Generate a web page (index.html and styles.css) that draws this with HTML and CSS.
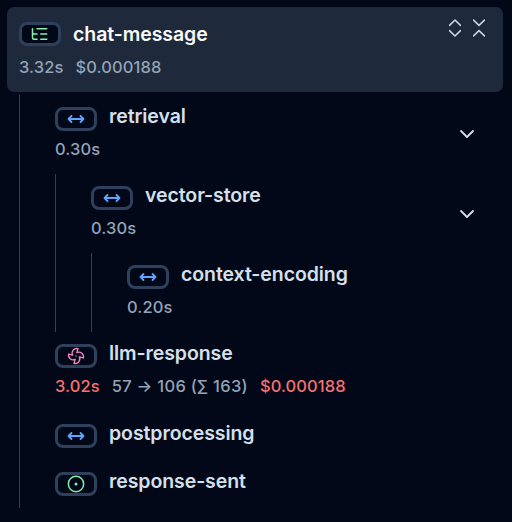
FILE: index.html
```html
<!DOCTYPE html>
<html lang="en">
<head>
<meta charset="utf-8">
<title>Trace</title>
<link rel="stylesheet" href="styles.css">
</head>
<body>
<svg class="defs" width="0" height="0">
  <symbol id="span" viewBox="0 0 24 24"><path d="m18 8 4 4-4 4M2 12h20M6 8l-4 4 4 4"/></symbol>
  <symbol id="tree" viewBox="0 0 24 24"><path d="M21 12h-8M21 5H8M21 19h-8M2 5v5c0 1.1.9 2 2 2h4M2 10v7c0 1.1.9 2 2 2h4"/></symbol>
  <symbol id="fan" viewBox="0 0 24 24"><path d="M10.827 16.379a6.082 6.082 0 0 1-8.618-7.002l5.412 1.45a6.082 6.082 0 0 1 7.002-8.618l-1.45 5.412a6.082 6.082 0 0 1 8.618 7.002l-5.412-1.45a6.082 6.082 0 0 1-7.002 8.618l1.45-5.412ZM12 12v.01"/></symbol>
  <symbol id="event" viewBox="0 0 24 24"><circle cx="12" cy="12" r="10.2"/><circle cx="12" cy="12" r="1"/></symbol>
  <symbol id="down" viewBox="0 0 24 24"><path d="m6 9 6 6 6-6"/></symbol>
</svg>
<main class="trace">
  <header class="root">
    <div class="body">
      <div class="title"><span class="badge green"><svg><use href="#tree"/></svg></span><span class="name">chat-message</span></div>
      <div class="meta"><span>3.32s</span><span>$0.000188</span></div>
    </div>
    <div class="actions">
      <svg viewBox="0 0 12 18"><path d="m.5 6.3 5.5-5.3 5.5 5.3M.5 11.7 6 17l5.5-5.3"/></svg>
      <svg viewBox="0 0 12 18"><path d="M.5 1 6 6.3 11.5 1M.5 17 6 11.7l5.5 5.3"/></svg>
    </div>
  </header>
  <div class="children">
    <div class="row">
      <div class="body">
        <div class="title"><span class="badge blue"><svg><use href="#span"/></svg></span><span class="name">retrieval</span></div>
        <div class="meta"><span>0.30s</span></div>
      </div>
      <svg class="chevron"><use href="#down"/></svg>
    </div>
    <div class="children">
      <div class="row">
        <div class="body">
          <div class="title"><span class="badge blue"><svg><use href="#span"/></svg></span><span class="name">vector-store</span></div>
          <div class="meta"><span>0.30s</span></div>
        </div>
        <svg class="chevron"><use href="#down"/></svg>
      </div>
      <div class="children">
        <div class="row">
          <div class="body">
            <div class="title"><span class="badge blue"><svg><use href="#span"/></svg></span><span class="name">context-encoding</span></div>
            <div class="meta"><span>0.20s</span></div>
          </div>
        </div>
      </div>
    </div>
    <div class="row usage">
      <div class="body">
        <div class="title"><span class="badge pink"><svg><use href="#fan"/></svg></span><span class="name">llm-response</span></div>
        <div class="meta"><span class="hot">3.02s</span><span class="tokens">57 → 106 (∑ 163)</span><span class="hot">$0.000188</span></div>
      </div>
    </div>
    <div class="row compact">
      <div class="title"><span class="badge blue"><svg><use href="#span"/></svg></span><span class="name">postprocessing</span></div>
    </div>
    <div class="row compact">
      <div class="title"><span class="badge green"><svg><use href="#event"/></svg></span><span class="name">response-sent</span></div>
    </div>
  </div>
</main>
</body>
</html>
```
FILE: styles.css
```css
* { box-sizing: border-box; }
body {
  margin: 0;
  min-height: 522px;
  background: #020817;
  color: #d5e0ec;
  font-family: Inter, "Liberation Sans", sans-serif;
}
.defs { display: none; }
.trace { padding: 7px 9px 0 7px; }
svg {
  fill: none;
  stroke: currentColor;
  stroke-width: 2;
  stroke-linecap: round;
  stroke-linejoin: round;
}
.root {
  display: flex;
  justify-content: space-between;
  height: 85px;
  margin-bottom: 3px;
  padding: 15px 18px 0 12px;
  border-radius: 7px;
  background: #1e293b;
}
.root .name { color: #f8fafc; }
.actions { display: flex; gap: 12px; margin-top: -3px; color: #cbd5e1; }
.actions svg { width: 12px; height: 18px; stroke-width: 1.6; }
.children {
  margin-left: 12px;
  padding-left: 23px;
  border-left: 1px solid #334155;
}
.children > .row { padding-left: 12px; }
.row {
  display: flex;
  justify-content: space-between;
  height: 79px;
  padding: 12px 27px 0 0;
}
.row.usage { height: 80px; }
.row.compact { height: 48px; }
.title { display: flex; gap: 12px; height: 24px; }
.badge {
  display: flex;
  align-items: center;
  justify-content: center;
  width: 42px;
  height: 24px;
  border: 3px solid #2e405b;
  border-radius: 8px;
  background: #020817;
}
.badge svg { width: 18px; height: 18px; }
.blue { color: #60a5fa; }
.blue svg { stroke-width: 2.4; }
.green { color: #86efac; }
.pink { color: #f285c1; }
.pink svg { stroke-width: 1.8; }
.name {
  margin-top: -3px;
  font-size: 19.5px;
  font-weight: 600;
  letter-spacing: -0.08px;
  line-height: 24px;
}
.root .name { margin-top: 0; }
.meta {
  display: flex;
  gap: 12px;
  margin-top: 6px;
  color: #94a3b8;
  font-size: 16.5px;
  font-weight: 500;
  letter-spacing: 0.1px;
  line-height: 24px;
  white-space: nowrap;
}
.root .meta { margin-top: 9px; }
.tokens { letter-spacing: 0.28px; }
.hot { color: #f87171; }
.chevron { width: 24px; height: 24px; margin: 15px -3px 0 0; color: #d5e0ec; stroke-width: 1.8; }
.children .children .chevron { margin-top: 16px; }
```
